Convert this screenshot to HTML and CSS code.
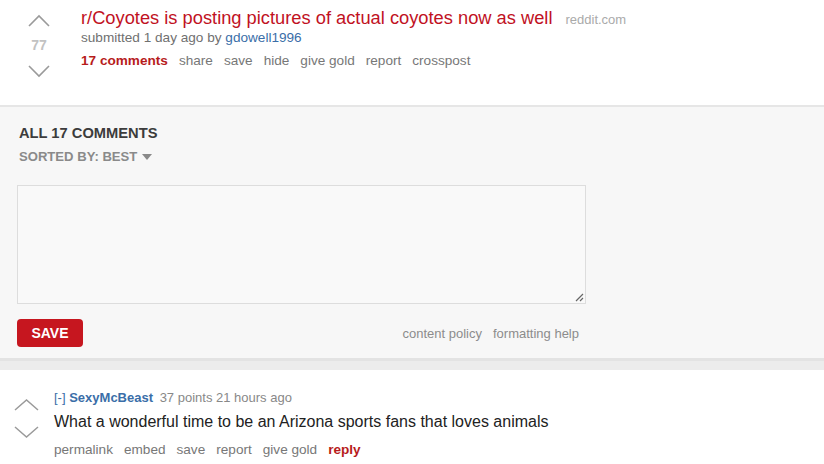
FILE: index.html
```html
<!DOCTYPE html>
<html>
<head>
<meta charset="utf-8">
<link rel="stylesheet" href="styles.css">
</head>
<body>
<div class="post">
  <div class="votes">
    <svg class="arrow" width="24" height="14" viewBox="0 0 24 14"><path d="M2 13 L12 3 L22 13" fill="none" stroke="#9a9a9a" stroke-width="1.6"/></svg>
    <div class="score">77</div>
    <svg class="arrow" width="24" height="14" viewBox="0 0 24 14"><path d="M2 1 L12 11 L22 1" fill="none" stroke="#9a9a9a" stroke-width="1.6"/></svg>
  </div>
  <div class="entry">
    <div class="title-line"><a class="title">r/Coyotes is posting pictures of actual coyotes now as well</a><span class="domain">reddit.com</span></div>
    <div class="tagline">submitted 1 day ago by <a class="author">gdowell1996</a></div>
    <ul class="buttons">
      <li class="comments">17 comments</li><li>share</li><li>save</li><li>hide</li><li>give gold</li><li>report</li><li>crosspost</li>
    </ul>
  </div>
</div>
<div class="panel">
  <div class="panel-title">ALL 17 COMMENTS</div>
  <div class="sorted">SORTED BY: BEST <span class="caret"></span></div>
  <div class="textarea">
    <svg class="grip" width="10" height="10" viewBox="0 0 10 10"><path d="M9 2 L2 9 M9 6 L6 9" stroke="#666" stroke-width="1.2"/></svg>
  </div>
  <div class="form-bottom">
    <button class="save">SAVE</button>
    <div class="help"><span>content policy</span><span>formatting help</span></div>
  </div>
</div>
<div class="band"></div>
<div class="comment">
  <div class="cvotes">
    <svg width="25" height="14" viewBox="0 0 25 14"><path d="M1 13 L12.5 3 L24 13" fill="none" stroke="#9a9a9a" stroke-width="1.5"/></svg>
    <svg width="25" height="14" viewBox="0 0 25 14"><path d="M1 1 L12.5 11 L24 1" fill="none" stroke="#9a9a9a" stroke-width="1.5"/></svg>
  </div>
  <div class="centry">
    <div class="ctag"><span class="expand">[-]</span> <a class="cauthor">SexyMcBeast</a> <span class="meta">37 points 21 hours ago</span></div>
    <div class="cbody">What a wonderful time to be an Arizona sports fans that loves animals</div>
    <ul class="cbuttons"><li>permalink</li><li>embed</li><li>save</li><li>report</li><li>give gold</li><li class="reply">reply</li></ul>
  </div>
</div>
</body>
</html>
```

FILE: styles.css
```css
* { box-sizing: border-box; }
html, body { margin: 0; padding: 0; background: #fff; }
body { font-family: "Liberation Sans", Arial, sans-serif; width: 824px; height: 464px; overflow: hidden; }
a { text-decoration: none; }
ul { list-style: none; margin: 0; padding: 0; display: flex; }

.post { display: flex; height: 105px; padding-top: 6px; }
.votes { width: 78px; display: flex; flex-direction: column; align-items: center; padding-top: 7px; }
.arrow { display: block; }
.score { color: #c2c2c2; font-size: 14px; font-weight: bold; line-height: 16px; margin: 10px 0 12px; }
.entry { padding-left: 3px; }
.title-line { display: flex; align-items: baseline; }
.title { color: #c1121f; font-size: 18.3px; line-height: 24px; }
.domain { color: #aaa; font-size: 13px; margin-left: 13px; }
.tagline { color: #707070; font-size: 13.6px; line-height: 16px; margin-top: 0; }
.author { color: #3a6ea8; }
.buttons { margin-top: 7px; font-size: 13.6px; line-height: 16px; color: #777; }
.buttons li { margin-right: 11px; }
.buttons .comments { color: #b71c1c; font-weight: bold; }

.panel { background: #f7f7f7; border-top: 2px solid #e6e6e6; border-bottom: 3px solid #e3e3e3; height: 256px; padding: 18px 0 0 19px; }
.panel-title { color: #3c3c3c; font-weight: bold; font-size: 14.7px; line-height: 17px; }
.sorted { color: #8a8a8a; font-weight: bold; font-size: 13.1px; line-height: 16px; margin-top: 7px; display: flex; align-items: center; }
.caret { display: inline-block; width: 0; height: 0; border-left: 5px solid transparent; border-right: 5px solid transparent; border-top: 6px solid #8a8a8a; margin-left: 5px; }
.textarea { position: relative; width: 569px; height: 119px; margin: 20px 0 0 -2px; border: 1px solid #ddd; background: #f9f9f9; }
.grip { position: absolute; right: 1px; bottom: 1px; }
.form-bottom { display: flex; align-items: center; justify-content: space-between; width: 562px; margin: 15px 0 0 -2px; }
.save { background: #c6161f; color: #fff; border: none; border-radius: 4px; font-family: inherit; font-weight: bold; font-size: 14px; width: 66px; height: 28px; padding: 0; }
.help { color: #8c8c8c; font-size: 13px; display: flex; gap: 11px; }

.band { height: 9px; background: #ececec; }

.comment { display: flex; padding-top: 20px; }
.cvotes { width: 54px; padding: 7px 0 0 14px; display: flex; flex-direction: column; gap: 15px; }
.cvotes svg { display: block; }
.ctag { font-size: 13px; line-height: 16px; }
.expand { color: #3a6ea8; }
.cauthor { color: #3a6ea8; font-weight: bold; }
.meta { color: #888; margin-left: 3px; }
.cbody { color: #222; font-size: 16px; line-height: 20px; margin-top: 6px; }
.cbuttons { font-size: 13.6px; line-height: 16px; color: #777; margin-top: 10px; }
.cbuttons li { margin-right: 11px; }
.cbuttons .reply { color: #b71c1c; font-weight: bold; }
```
